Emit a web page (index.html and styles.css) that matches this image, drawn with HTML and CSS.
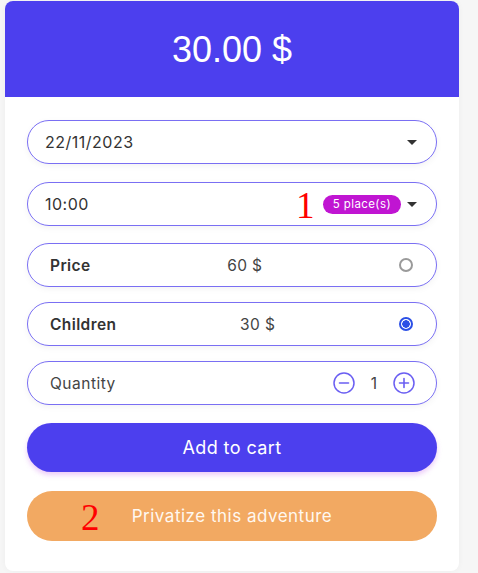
FILE: index.html
```html
<!DOCTYPE html>
<html>
<head>
<meta charset="utf-8">
<link rel="stylesheet" href="styles.css">
</head>
<body>
<div class="card">
  <div class="header">30.00 $</div>
  <div class="content">
    <div class="field select">
      <span class="val">22/11/2023</span>
      <span class="caret"></span>
    </div>
    <div class="field select time">
      <span class="val">10:00</span>
      <span class="right">
        <span class="badge">5 place(s)</span>
        <span class="caret"></span>
      </span>
      <span class="mark mark1">1</span>
    </div>
    <div class="field option first-opt">
      <span class="label">Price</span>
      <span class="amount">60 $</span>
      <span class="radio"></span>
    </div>
    <div class="field option tight">
      <span class="label">Children</span>
      <span class="amount">30 $</span>
      <span class="radio checked"></span>
    </div>
    <div class="field option tight">
      <span class="qlabel">Quantity</span>
      <span class="stepper">
        <svg class="qbtn" viewBox="0 0 22 22" width="22" height="22"><circle cx="11" cy="11" r="10" fill="none" stroke="#6b5ff2" stroke-width="1.5"/><path d="M6.5 11h9" stroke="#6b5ff2" stroke-width="1.6" stroke-linecap="round"/></svg>
        <span class="qty">1</span>
        <svg class="qbtn" viewBox="0 0 22 22" width="22" height="22"><circle cx="11" cy="11" r="10" fill="none" stroke="#6b5ff2" stroke-width="1.5"/><path d="M6.5 11h9M11 6.5v9" stroke="#6b5ff2" stroke-width="1.6" stroke-linecap="round"/></svg>
      </span>
    </div>
    <button class="btn primary">Add to cart</button>
    <button class="btn secondary">Privatize this adventure<span class="mark mark2">2</span></button>
  </div>
</div>
</body>
</html>
```
FILE: styles.css
```css
* { box-sizing: border-box; }
html, body { margin: 0; padding: 0; }
body {
  background: #f6f6f6;
  font-family: Inter, "Noto Sans", sans-serif;
  width: 478px;
  height: 573px;
  overflow: hidden;
}
.card {
  width: 454px;
  margin: 1px 0 0 5px;
  background: #fff;
  border-radius: 8px;
  overflow: hidden;
  box-shadow: 0 0 6px rgba(0,0,0,0.04);
  padding-bottom: 30px;
}
.header {
  height: 96px;
  background: #4c3fee;
  color: #fff;
  font-family: "Liberation Sans", Arial, sans-serif;
  font-size: 36px;
  display: flex;
  align-items: center;
  justify-content: center;
  padding-top: 2px;
}
.content {
  padding: 23px 22px 0;
  display: flex;
  flex-direction: column;
  gap: 18px;
}
.field {
  position: relative;
  height: 44px;
  border: 1px solid #7a6ff3;
  border-radius: 22px;
  display: flex;
  align-items: center;
  justify-content: space-between;
  padding: 0 18px 0 17px;
  color: #333;
  box-shadow: 0 2px 6px rgba(0,0,0,0.05);
}
.first-opt { margin-top: -1px; }
.tight { margin-top: -3px; }
.val { font-size: 16px; letter-spacing: 0.5px; color: #333; }
.caret {
  width: 0; height: 0;
  border-left: 5px solid transparent;
  border-right: 5px solid transparent;
  border-top: 5px solid #333;
  margin-right: 1px;
}
.right { display: flex; align-items: center; gap: 6px; }
.badge {
  background: #c015d2;
  color: #fff;
  font-size: 11.5px;
  letter-spacing: 0.4px;
  height: 19px;
  line-height: 19px;
  padding: 0 10px;
  border-radius: 10px;
}
.mark {
  position: absolute;
  color: #f00;
  font-family: "Liberation Serif", "DejaVu Serif", serif;
  font-size: 37px;
  letter-spacing: 0;
  line-height: 1;
}
.mark1 { left: 268px; top: 4px; }
.mark2 { left: 54px; top: 8px; }
.option { padding: 0 23px 0 22px; }
.label { font-size: 15.5px; letter-spacing: 0.4px; font-weight: 600; color: #333; }
.amount { font-size: 15.5px; letter-spacing: 0.4px; color: #444; }
.qlabel { font-size: 15.5px; letter-spacing: 0.5px; color: #444; }
.radio {
  width: 14px; height: 14px;
  border: 2px solid #9a9a9a;
  border-radius: 50%;
}
.radio.checked {
  border-color: #2b4fe6;
  background: radial-gradient(circle, #2b4fe6 0 3.5px, #fff 4px);
}
.stepper { display: flex; align-items: center; margin-right: -2px; }
.qbtn { display: block; }
.qty { font-size: 15.5px; color: #444; width: 38px; text-align: center; }
.btn {
  position: relative;
  height: 49px;
  border: none;
  border-radius: 25px;
  color: #fff;
  font-family: Inter, "Noto Sans", sans-serif;
  font-size: 18px;
  letter-spacing: 0.4px;
  width: 100%;
  padding: 0;
}
.primary {
  background: #4c3fee;
  box-shadow: 0 3px 5px rgba(200, 110, 235, 0.35);
}
.secondary {
  background: #f2a962;
  height: 50px;
  font-size: 17px;
  letter-spacing: 0.5px;
  color: #fff8f0;
  margin-top: 1px;
}
```
